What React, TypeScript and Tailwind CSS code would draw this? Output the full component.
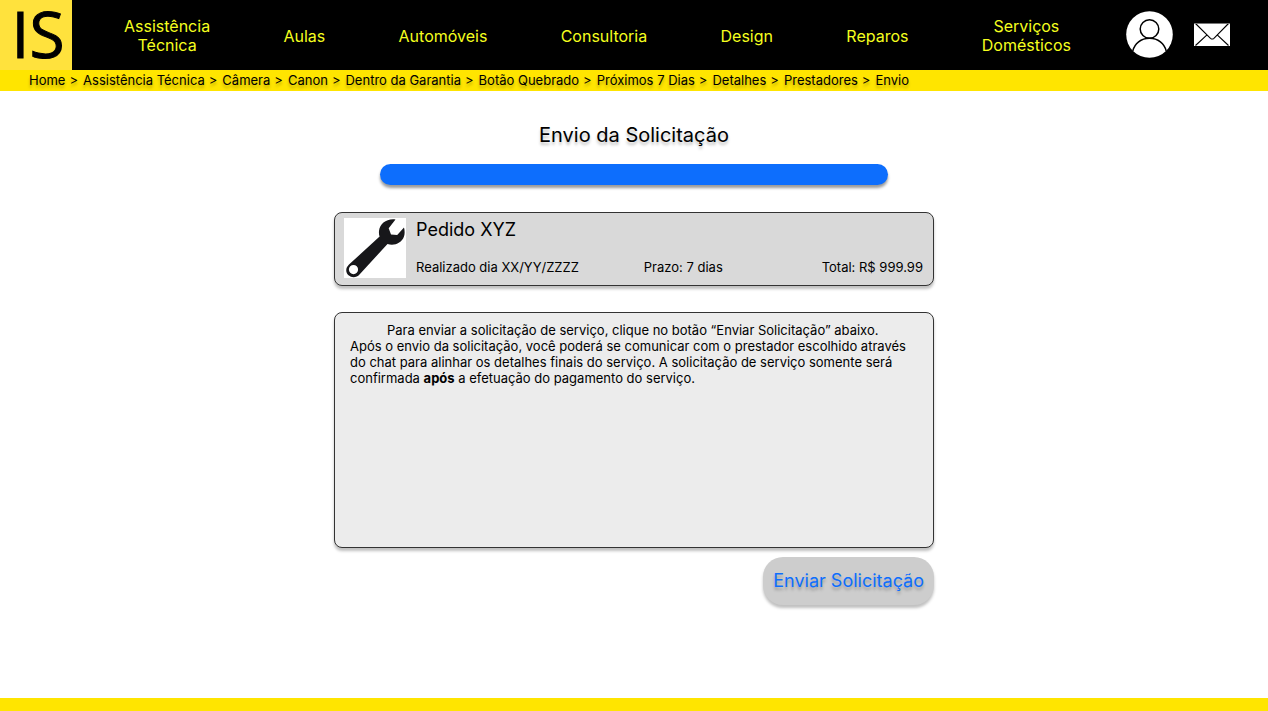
const categories = [
  'Assistência Técnica',
  'Aulas',
  'Automóveis',
  'Consultoria',
  'Design',
  'Reparos',
  'Serviços Domésticos',
];

const trail = [
  'Home',
  'Assistência Técnica',
  'Câmera',
  'Canon',
  'Dentro da Garantia',
  'Botão Quebrado',
  'Próximos 7 Dias',
  'Detalhes',
  'Prestadores',
  'Envio',
];

function UserIcon() {
  return (
    <svg viewBox="0 0 47 47" className="size-[47px]" aria-hidden="true">
      <circle cx="23.5" cy="23.5" r="23.3" fill="#fff" />
      <g fill="none" stroke="#000" strokeWidth="1.5">
        <circle cx="23.5" cy="18" r="9.3" />
        <path d="M6.800 40C8.500 32.500 15 27.300 23.500 27.300S38.500 32.500 40.200 40" />
      </g>
    </svg>
  );
}

function MailIcon() {
  return (
    <svg viewBox="0 0 36 23" className="h-[23px] w-9" aria-hidden="true">
      <rect width="36" height="23" fill="#fff" />
      <g fill="none" stroke="#000" strokeWidth="1.1">
        <path d="M1.500 .5L16.500 15.300Q18.200 16.800 19.900 15.300L34.500 .5" />
        <path d="M1.500 22.500L13 11.800M34.500 22.500L23.200 11.800" />
      </g>
      <path d="M0 .5H36" stroke="#777" />
    </svg>
  );
}

function WrenchIcon() {
  return (
    <svg viewBox="0 0 62 60" className="h-[60px] w-[62px] shrink-0 bg-white" aria-hidden="true">
      <path
        fill="#17171a"
        fillRule="evenodd"
        d="M51.500 1.500C43 .2 35.800 5.500 35 13C34.800 15.500 35 17 35.600 18.600L5 46.500C1.300 50 1.500 54.500 4.500 57.300C8 60.300 12.800 59.500 15.500 56.500L43.500 26C50 28 57.500 25.500 60 18.500C60.900 15.500 60.800 12.500 60 9.500L53.200 17L47 16.500L44.700 10.300ZM9.500 47A4.600 4.600 0 1 0 9.500 56.200A4.600 4.600 0 1 0 9.500 47Z"
      />
    </svg>
  );
}

export default function App() {
  return (
    <div className="flex min-h-screen flex-col bg-white font-['Inter',sans-serif] text-black">
      <header>
        <div className="flex h-[70px] items-center bg-black">
          <a
            href="#"
            aria-label="IS, página inicial"
            className="flex h-full w-[72px] shrink-0 items-center justify-center bg-[#ffe23d] pb-[3px] pl-1 font-['Open_Sans',sans-serif] text-[64px] leading-none [-webkit-text-stroke:1px_#000]"
          >
            IS
          </a>
          <nav className="flex flex-1 items-center justify-between pt-[2px] pr-[55px] pl-[52px]">
            {categories.map((name) => (
              <a
                key={name}
                href="#"
                className="w-min text-center text-base leading-[19px] text-[#f5ff1e]"
              >
                {name}
              </a>
            ))}
          </nav>
          <div className="flex items-center gap-[21px] pr-[38px] pb-[2px]">
            <button type="button" aria-label="Perfil">
              <UserIcon />
            </button>
            <button type="button" aria-label="Mensagens">
              <MailIcon />
            </button>
          </div>
        </div>
        <nav
          aria-label="Trilha"
          className="flex min-h-[21px] flex-wrap gap-x-1 bg-[#ffe500] px-[29px] text-[13px] leading-[21px] [text-shadow:0_3px_3px_rgba(0,0,0,0.25)]"
        >
          {trail.map((step, i) => (
            <span key={step} className="flex gap-[5px]">
              {i > 0 && <span>&gt;</span>}
              <a href="#">{step}</a>
            </span>
          ))}
        </nav>
      </header>

      <main className="mx-auto flex w-full max-w-[600px] flex-1 flex-col pt-8">
        <h1 className="text-center text-xl leading-6 [text-shadow:0_3px_3px_rgba(0,0,0,0.25)]">
          Envio da Solicitação
        </h1>
        <div
          role="progressbar"
          aria-label="Progresso"
          aria-valuenow={100}
          className="mx-[46px] mt-[17px] h-[21px] rounded-full bg-[#0d6efd] shadow-[0_3px_3px_rgba(0,0,0,0.4)]"
        />

        <section className="mt-[27px] flex gap-[10px] rounded-lg border border-[#333] bg-[#d9d9d9] pt-[5px] pr-[10px] pb-[7px] pl-[9px] shadow-[0_3px_3px_rgba(0,0,0,0.25)]">
          <WrenchIcon />
          <div className="flex flex-1 flex-col justify-between">
            <h2 className="text-lg leading-6">Pedido XYZ</h2>
            <div className="flex justify-between text-[13px] leading-[22px]">
              <span>Realizado dia XX/YY/ZZZZ</span>
              <span className="pr-[34px]">Prazo: 7 dias</span>
              <span>Total: R$ 999.99</span>
            </div>
          </div>
        </section>

        <section className="mt-[26px] min-h-[236px] rounded-lg border border-[#333] bg-[#ececec] px-[15px] py-[9px] text-[13px] leading-4 shadow-[0_3px_3px_rgba(0,0,0,0.25)]">
          <p className="indent-[37px]">
            Para enviar a solicitação de serviço, clique no botão “Enviar Solicitação” abaixo.
          </p>
          <p>
            Após o envio da solicitação, você poderá se comunicar com o prestador escolhido através
            do chat para alinhar os detalhes finais do serviço. A solicitação de serviço somente
            será confirmada <strong>após</strong> a efetuação do pagamento do serviço.
          </p>
        </section>

        <button
          type="button"
          className="mt-[9px] self-end rounded-[20px] bg-[#cdcdcd] px-[10px] py-3 text-lg leading-6 text-[#0d6efd] shadow-[0_3px_3px_rgba(0,0,0,0.25)] [text-shadow:0_3px_3px_rgba(0,0,0,0.25)]"
        >
          Enviar Solicitação
        </button>
      </main>

      <footer className="h-[13px] bg-[#ffe500]" />
    </div>
  );
}
